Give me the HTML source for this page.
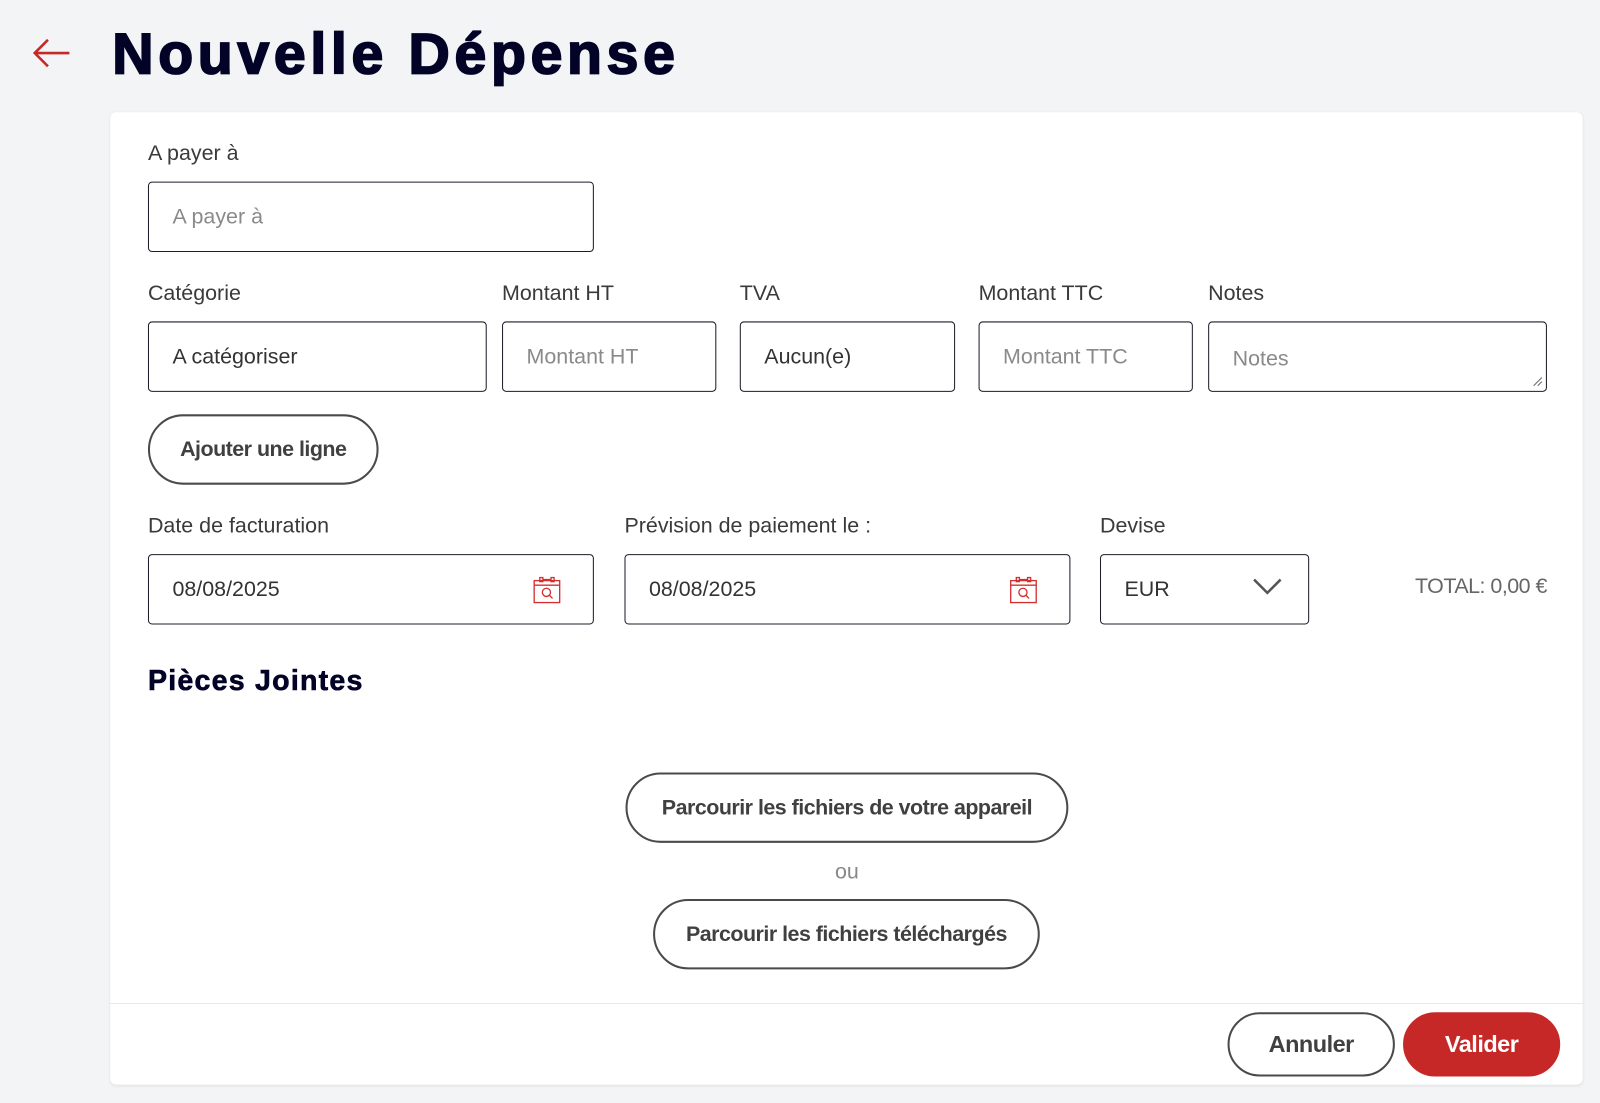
<!DOCTYPE html>
<html><head><meta charset="utf-8"><style>
*{box-sizing:border-box;margin:0;padding:0}
body{width:1600px;height:1103px;background:#f3f4f6;font-family:"Liberation Sans",sans-serif;overflow:hidden;color:#333}
#w{position:absolute;left:0;top:0;width:1568px;height:1081px;transform:scale(1.0204);transform-origin:0 0}
.a{position:absolute}
h1{position:absolute;left:110px;top:20px;font-size:56px;font-weight:bold;color:#020327;letter-spacing:4.6px;-webkit-text-stroke:1.8px #020327;font-family:"Liberation Sans",sans-serif}
.card{position:absolute;left:108px;top:110px;width:1443px;height:953px;background:#fff;border-radius:6px;box-shadow:0 1px 3px rgba(0,0,0,.08)}
.lbl{position:absolute;font-size:21px;color:#3a3a3a;letter-spacing:0}
.box{position:absolute;height:69px;border:1.5px solid #1c1c2a;border-radius:4px;font-size:21px;letter-spacing:0;display:flex;align-items:center;padding-left:23px;color:#333}
.ph{color:#8a8a8a}
.btn{position:absolute;border:2.5px solid #4a4a4a;border-radius:40px;font-size:21px;font-weight:bold;color:#404040;display:flex;align-items:center;justify-content:center;letter-spacing:-0.5px;background:#fff}
</style></head><body><div id="w">
<svg class="a" style="left:32px;top:37px" width="38" height="30" viewBox="0 0 38 30"><path d="M36 15H3M15 2L2 15l13 13" fill="none" stroke="#c62828" stroke-width="2.5"/></svg>
<h1>Nouvelle Dépense</h1>
<div class="card"></div>
<div class="lbl" style="left:145px;top:139px">A payer à</div>
<div class="box ph" style="left:145px;top:178px;width:437px">A payer à</div>
<div class="lbl" style="left:145px;top:276px">Catégorie</div>
<div class="lbl" style="left:492px;top:276px">Montant HT</div>
<div class="lbl" style="left:725px;top:276px">TVA</div>
<div class="lbl" style="left:959px;top:276px">Montant TTC</div>
<div class="lbl" style="left:1184px;top:276px">Notes</div>
<div class="box" style="left:145px;top:315px;width:332px">A catégoriser</div>
<div class="box ph" style="left:492px;top:315px;width:210px">Montant HT</div>
<div class="box" style="left:725px;top:315px;width:211px">Aucun(e)</div>
<div class="box ph" style="left:959px;top:315px;width:210px">Montant TTC</div>
<div class="box ph" style="left:1184px;top:315px;width:332px;padding-top:4px">Notes</div>
<svg class="a" style="left:1502px;top:369px" width="10" height="10"><path d="M1 9L9 1M5 9L9 5" stroke="#666" stroke-width="1"/></svg>
<div class="btn" style="left:145px;top:406px;width:226px;height:69px">Ajouter une ligne</div>
<div class="lbl" style="left:145px;top:504px">Date de facturation</div>
<div class="lbl" style="left:612px;top:504px">Prévision de paiement le :</div>
<div class="lbl" style="left:1078px;top:504px">Devise</div>
<div class="box" style="left:145px;top:543px;width:437px">08/08/2025</div>
<div class="box" style="left:612px;top:543px;width:437px">08/08/2025</div>
<svg class="a" style="left:522px;top:564px" width="28" height="28" viewBox="0 0 28 28"><g fill="none" stroke="#d32f2f" stroke-width="1.3"><rect x="1.5" y="5" width="25" height="21.5"/><path d="M1.5 9.5h25"/><rect x="7" y="2" width="3" height="4"/><rect x="18" y="2" width="3" height="4"/><path d="M10 4h8"/><circle cx="13.5" cy="16.5" r="4"/><path d="M16.5 19.5l3 3"/></g></svg>
<svg class="a" style="left:989px;top:564px" width="28" height="28" viewBox="0 0 28 28"><g fill="none" stroke="#d32f2f" stroke-width="1.3"><rect x="1.5" y="5" width="25" height="21.5"/><path d="M1.5 9.5h25"/><rect x="7" y="2" width="3" height="4"/><rect x="18" y="2" width="3" height="4"/><path d="M10 4h8"/><circle cx="13.5" cy="16.5" r="4"/><path d="M16.5 19.5l3 3"/></g></svg>
<div class="box" style="left:1078px;top:543px;width:205px">EUR</div>
<svg class="a" style="left:1227px;top:566px" width="30" height="18"><path d="M2 2l13 13L28 2" fill="none" stroke="#555" stroke-width="2.5"/></svg>
<div class="lbl" style="left:1366px;top:563px;width:150px;text-align:right;color:#666;letter-spacing:-0.5px">TOTAL: 0,00 €</div>
<div class="a" style="left:145px;top:651px;font-size:28px;font-weight:bold;color:#020327;letter-spacing:1.2px;-webkit-text-stroke:0.6px #020327">Pièces Jointes</div>
<div class="btn" style="left:613px;top:757px;width:434px;height:69px">Parcourir les fichiers de votre appareil</div>
<div class="a" style="left:0;width:1660px;top:843px;text-align:center;font-size:21px;color:#888">ou</div>
<div class="btn" style="left:640px;top:881px;width:379px;height:69px">Parcourir les fichiers téléchargés</div>
<div class="a" style="left:108px;top:983px;width:1443px;height:1px;background:#e8e8ea"></div>
<div class="btn" style="left:1203px;top:992px;width:164px;height:63px;font-size:23px">Annuler</div>
<div class="btn" style="left:1375px;top:992px;width:154px;height:63px;font-size:23px;background:#c62828;border-color:#c62828;color:#fff">Valider</div>
</div></body></html>
